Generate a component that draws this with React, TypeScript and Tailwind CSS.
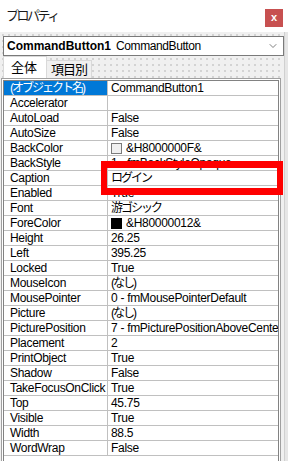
import { ChevronDown } from 'lucide-react'

type Prop = {
    name: string
    value: string
    jpName?: boolean
    jpValue?: boolean
    swatch?: 'white' | 'black'
}

const PROPS: Prop[] = [
    { name: '(オブジェクト名)', value: 'CommandButton1', jpName: true },
    { name: 'Accelerator', value: '' },
    { name: 'AutoLoad', value: 'False' },
    { name: 'AutoSize', value: 'False' },
    { name: 'BackColor', value: '&H8000000F&', swatch: 'white' },
    { name: 'BackStyle', value: '1 - fmBackStyleOpaque' },
    { name: 'Caption', value: 'ログイン', jpValue: true },
    { name: 'Enabled', value: 'True' },
    { name: 'Font', value: '游ゴシック', jpValue: true },
    { name: 'ForeColor', value: '&H80000012&', swatch: 'black' },
    { name: 'Height', value: '26.25' },
    { name: 'Left', value: '395.25' },
    { name: 'Locked', value: 'True' },
    { name: 'MouseIcon', value: '(なし)', jpValue: true },
    { name: 'MousePointer', value: '0 - fmMousePointerDefault' },
    { name: 'Picture', value: '(なし)', jpValue: true },
    { name: 'PicturePosition', value: '7 - fmPicturePositionAboveCenter' },
    { name: 'Placement', value: '2' },
    { name: 'PrintObject', value: 'True' },
    { name: 'Shadow', value: 'False' },
    { name: 'TakeFocusOnClick', value: 'True' },
    { name: 'Top', value: '45.75' },
    { name: 'Visible', value: 'True' },
    { name: 'Width', value: '88.5' },
    { name: 'WordWrap', value: 'False' },
]

function PropRow({ prop, selected }: { prop: Prop; selected: boolean }) {
    return (
        <div className="flex h-[15px] border-b border-[#c0c0c0] text-[12px] leading-[14px] tracking-[-0.3px] text-black">
            <div
                className={`w-[104px] shrink-0 border-r border-[#c0c0c0] pl-[6px] whitespace-nowrap overflow-hidden ${
                    selected ? 'bg-[#0078d7] text-white' : ''
                } ${prop.jpName ? 'tracking-[-2px]' : ''}`}
            >
                {prop.name}
            </div>
            <div className="flex flex-1 min-w-0 items-center pl-[3px] whitespace-nowrap overflow-hidden">
                {prop.swatch && (
                    <span
                        className={`mr-[4px] h-[11px] w-[11px] shrink-0 border ${
                            prop.swatch === 'white' ? 'border-[#7a7a7a] bg-[#f0f0f0]' : 'border-black bg-black'
                        }`}
                    />
                )}
                <span className={prop.jpValue ? 'tracking-[-2px]' : ''}>{prop.value}</span>
            </div>
        </div>
    )
}

export default function App() {
    return (
        <div className="relative h-[461px] w-[288px] overflow-hidden bg-[#f0f0f0] font-['Liberation_Sans','Noto_Sans_CJK_JP',sans-serif]">
            {/* Title bar */}
            <div className="flex h-[32px] items-start justify-between bg-white pl-[6px] pr-[5px]">
                <span className="mt-[8px] text-[13px] leading-[16px] tracking-[-2.5px] text-[#1a1a1a]">
                    プロパティ
                </span>
                <div className="mt-[9px] flex h-[18px] w-[18px] items-center justify-center bg-[#c75050] pb-px text-[11px] font-bold leading-none text-white">
                    x
                </div>
            </div>

            {/* Body */}
            <div className="flex">
                <div className="w-[284px] shrink-0 bg-[#f0f0f0] bg-[radial-gradient(circle,#d2d2d2_0.7px,transparent_1px)] bg-[length:6px_6px]">
                    {/* Object combo */}
                    <div className="ml-[3px] mt-[4px] flex h-[20px] w-[281px] items-center border border-[#7a7a7a] bg-white pl-[3px] pr-[4px] text-[12px] leading-none text-black">
                        <span className="font-bold">CommandButton1</span>
                        <span className="ml-[5px] tracking-[-0.4px]">CommandButton</span>
                        <ChevronDown className="ml-auto h-[12px] w-[12px] text-[#555]" strokeWidth={1.5} />
                    </div>

                    {/* Tabs */}
                    <div className="flex h-[22px] items-end pl-[3px] text-[13px] leading-none text-black">
                        <div className="flex h-[22px] w-[44px] items-center justify-center border-x border-t border-[#d9d9d9] bg-white pr-[2px]">
                            全体
                        </div>
                        <div className="flex h-[18px] w-[45px] items-center justify-center border-r border-t border-[#d9d9d9] bg-[#f0f0f0] tracking-[-1px]">
                            項目別
                        </div>
                    </div>

                    {/* Property grid */}
                    <div className="ml-[1px] w-[280px] border border-[#a0a0a0] bg-white p-px">
                        <div className="border border-[#828282] bg-white pb-[20px]">
                            {PROPS.map((p, i) => (
                                <PropRow key={p.name} prop={p} selected={i === 0} />
                            ))}
                        </div>
                    </div>
                </div>
                <div className="h-[440px] w-[4px] border-l border-[#d0d0d0] bg-[#e6e6e6]" />
            </div>

            {/* Red highlight around Caption */}
            <div className="absolute left-[101px] top-[161px] h-[34px] w-[182px] border-x-[6px] border-y-[7px] border-[#ff0000]" />
        </div>
    )
}
